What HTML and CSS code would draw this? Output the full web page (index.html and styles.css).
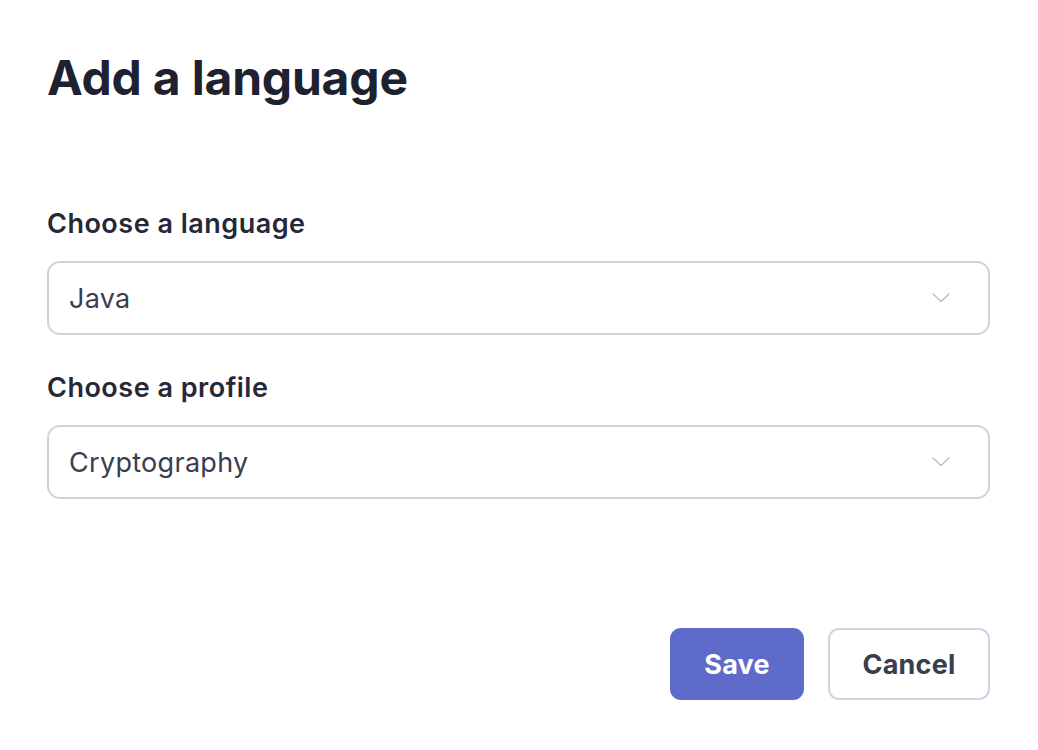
FILE: index.html
```html
<!DOCTYPE html>
<html>
<head>
<meta charset="utf-8">
<link rel="stylesheet" href="styles.css">
</head>
<body>
<div class="dialog">
  <h1 class="title">Add a language</h1>
  <div class="form">
    <div class="field">
      <label class="label">Choose a language</label>
      <div class="select">
        <span class="value">Java</span>
        <svg class="chev" width="18" height="10" viewBox="0 0 18 10"><path d="M1 1 L9 8.5 L17 1" fill="none" stroke="#b8bcc6" stroke-width="1.4" stroke-linecap="round" stroke-linejoin="round"/></svg>
      </div>
    </div>
    <div class="field">
      <label class="label">Choose a profile</label>
      <div class="select">
        <span class="value">Cryptography</span>
        <svg class="chev" width="18" height="10" viewBox="0 0 18 10"><path d="M1 1 L9 8.5 L17 1" fill="none" stroke="#b8bcc6" stroke-width="1.4" stroke-linecap="round" stroke-linejoin="round"/></svg>
      </div>
    </div>
  </div>
  <div class="actions">
    <button class="btn btn-primary">Save</button>
    <button class="btn btn-secondary">Cancel</button>
  </div>
</div>
</body>
</html>
```
FILE: styles.css
```css
* { box-sizing: border-box; }
html, body { margin: 0; padding: 0; background: #fff; }
body {
  font-family: Inter, "Noto Sans", sans-serif;
  width: 1038px;
  height: 750px;
  overflow: hidden;
}
.dialog {
  padding: 50px 48px 0 47px;
  display: flex;
  flex-direction: column;
}
.title {
  margin: 0;
  font-size: 48px;
  font-weight: 700;
  color: #1e2130;
  line-height: 56px;
  letter-spacing: -0.2px;
}
.form {
  margin-top: 101px;
  display: flex;
  flex-direction: column;
  gap: 36px;
}
.field {
  display: flex;
  flex-direction: column;
  gap: 20px;
}
.label {
  font-size: 27px;
  font-weight: 600;
  color: #262838;
  line-height: 34px;
  letter-spacing: 0.5px;
}
.select {
  height: 74px;
  border: 2px solid #d2d3d6;
  border-radius: 13px;
  display: flex;
  align-items: center;
  justify-content: space-between;
  padding: 0 38px 0 20px;
}
.value {
  font-size: 27px;
  color: #3a3d50;
  letter-spacing: 0.3px;
}
.chev { display: block; }
.actions {
  margin-top: 129px;
  display: flex;
  justify-content: flex-end;
  gap: 24px;
}
.btn {
  font-family: Inter, "Noto Sans", sans-serif;
  height: 72px;
  border-radius: 11px;
  font-size: 27px;
  font-weight: 700;
  letter-spacing: 0.2px;
  cursor: pointer;
}
.btn-primary {
  width: 134px;
  background: #5f6bcb;
  color: #fff;
  border: none;
}
.btn-secondary {
  width: 162px;
  background: #fff;
  color: #3a3c50;
  border: 2px solid #cdd4e2;
}
```
